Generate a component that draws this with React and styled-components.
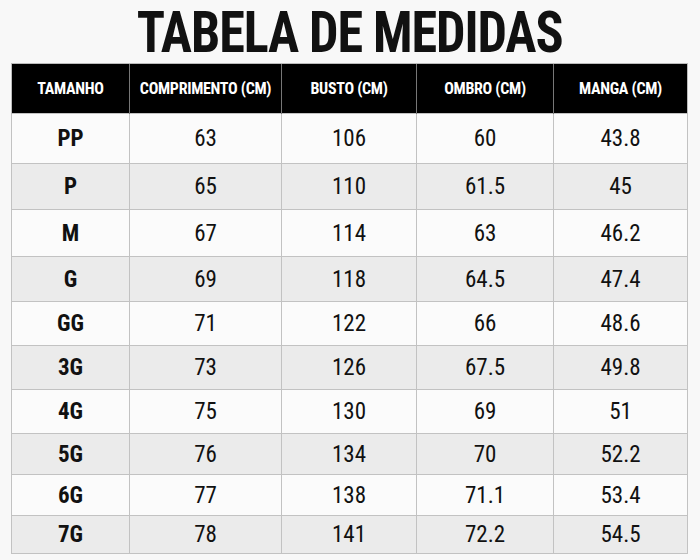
import React from 'react'
import styled, { createGlobalStyle } from 'styled-components'

const GlobalStyle = createGlobalStyle`
  body {
    margin: 0;
    background: #f8f8f8;
    font-family: "Roboto Condensed", "Roboto", sans-serif;
  }
`

const Page = styled.div`
  width: 700px;
  height: 560px;
  display: flex;
  flex-direction: column;
  align-items: center;
  padding-top: 3px;
  box-sizing: border-box;
`

const Title = styled.h1`
  margin: 0;
  height: 60px;
  font-size: 58px;
  line-height: 58px;
  font-weight: 700;
  color: #111;
  white-space: nowrap;
  letter-spacing: -1.2px;
  transform: scaleX(0.9);
`

const Table = styled.table`
  border-collapse: collapse;
  table-layout: fixed;
  width: 676px;
  margin-left: -1px;
`

const Head = styled.th`
  background: #000;
  color: #fff;
  height: 49px;
  padding: 0;
  font-size: 16px;
  font-weight: 700;
  letter-spacing: -0.3px;
  text-align: center;
  border-left: 1px solid #777;
  border-top: 1px solid #bbb;
  &:first-child { border-left: 1px solid #bbb; }
  &:last-child { border-right: 1px solid #bbb; }
`

const Row = styled.tr`
  height: ${p => p.h}px;
  background: ${p => (p.alt ? '#ebebeb' : '#fbfbfb')};
`

const Cell = styled.td`
  padding: 0;
  text-align: center;
  border: 1px solid #c2c2c2;
  color: #111;
  font-size: 23px;
  font-weight: ${p => (p.size ? 700 : 400)};
`

const widths = [118, 152, 135, 137, 134]
const headers = ['TAMANHO', 'COMPRIMENTO (CM)', 'BUSTO (CM)', 'OMBRO (CM)', 'MANGA (CM)']

const rows = [
  { h: 50, c: ['PP', '63', '106', '60', '43.8'] },
  { h: 46, c: ['P', '65', '110', '61.5', '45'] },
  { h: 47, c: ['M', '67', '114', '63', '46.2'] },
  { h: 45, c: ['G', '69', '118', '64.5', '47.4'] },
  { h: 44, c: ['GG', '71', '122', '66', '48.6'] },
  { h: 44, c: ['3G', '73', '126', '67.5', '49.8'] },
  { h: 44, c: ['4G', '75', '130', '69', '51'] },
  { h: 41, c: ['5G', '76', '134', '70', '52.2'] },
  { h: 41, c: ['6G', '77', '138', '71.1', '53.4'] },
  { h: 38, c: ['7G', '78', '141', '72.2', '54.5'] },
]

export default function App() {
  return (
    <Page>
      <GlobalStyle />
      <Title>TABELA DE MEDIDAS</Title>
      <Table>
        <colgroup>
          {widths.map((w, i) => <col key={i} style={{ width: w }} />)}
        </colgroup>
        <thead>
          <tr>
            {headers.map(h => <Head key={h}>{h}</Head>)}
          </tr>
        </thead>
        <tbody>
          {rows.map((r, i) => (
            <Row key={r.c[0]} h={r.h} alt={i % 2 === 1}>
              {r.c.map((v, j) => <Cell key={j} size={j === 0}>{v}</Cell>)}
            </Row>
          ))}
        </tbody>
      </Table>
    </Page>
  )
}
